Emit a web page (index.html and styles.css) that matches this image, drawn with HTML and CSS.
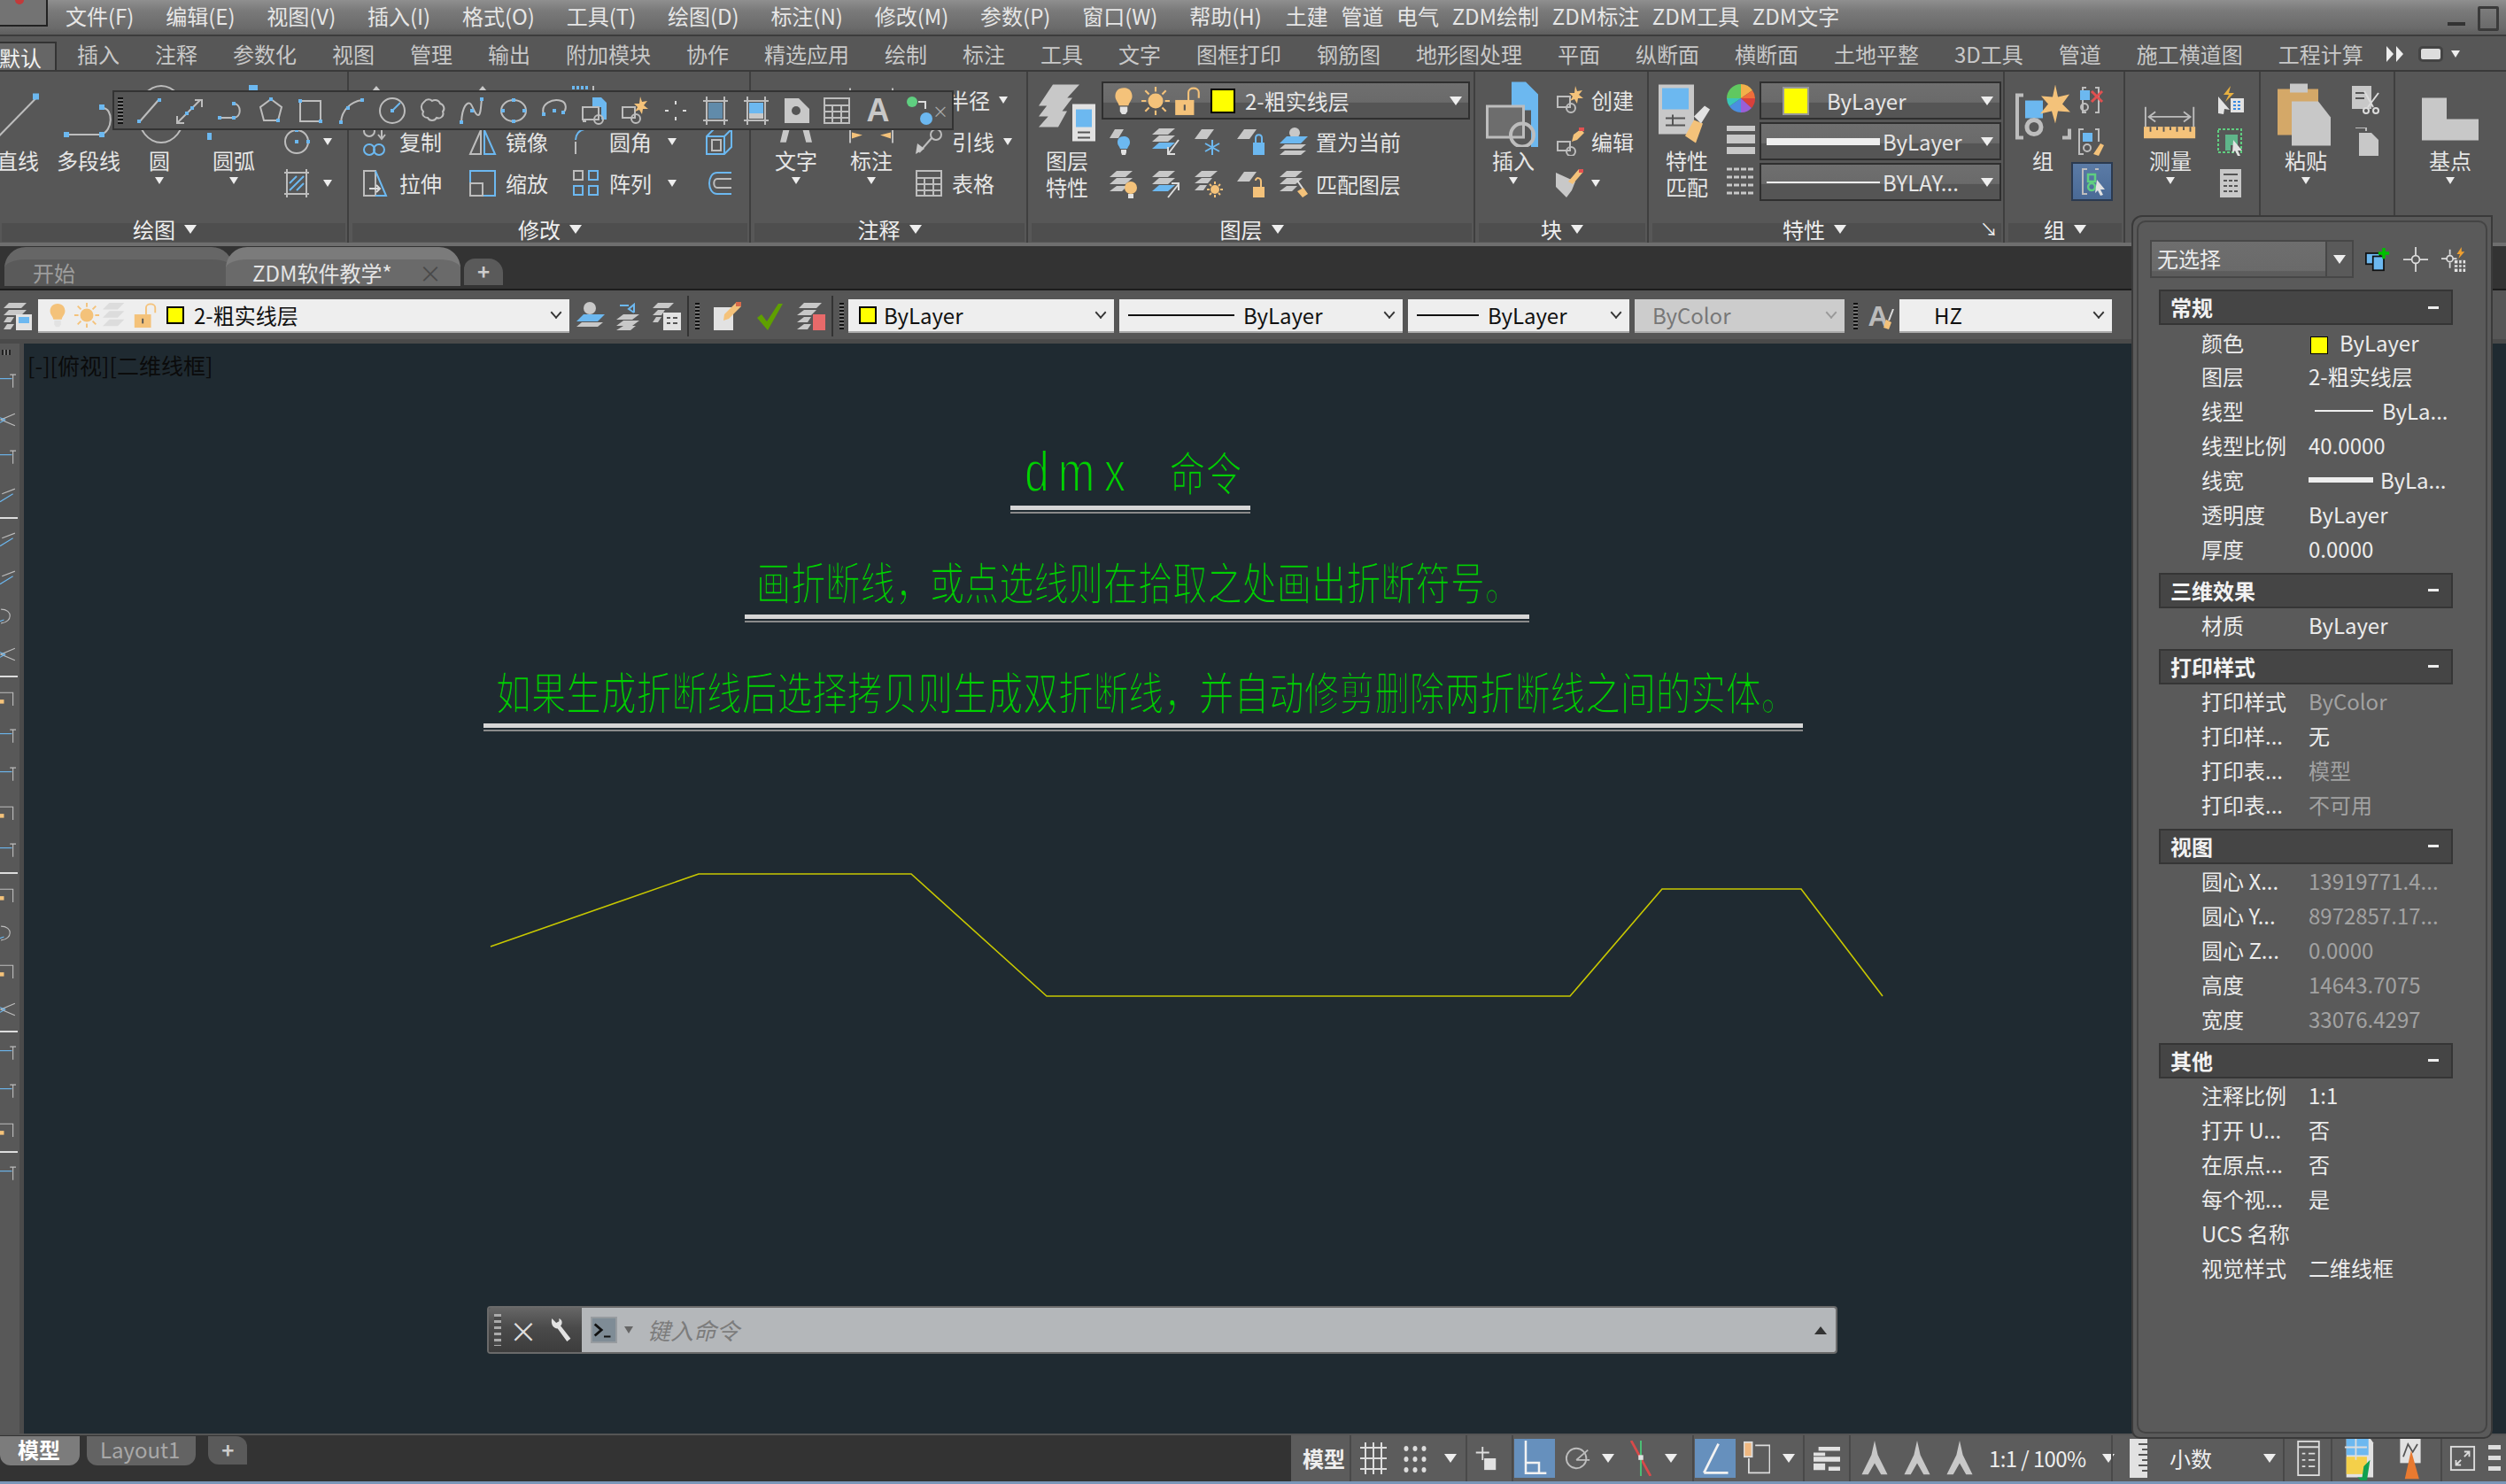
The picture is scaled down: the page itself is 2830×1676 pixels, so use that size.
FILE: index.html
```html
<!DOCTYPE html>
<html lang="zh-CN">
<head>
    <meta charset="UTF-8">
    <title>ZDM软件教学</title>
    <link rel="stylesheet" href="styles.css">
</head>
<body>
<svg class="sprite" xmlns="http://www.w3.org/2000/svg">
    <symbol id="bulb" viewBox="0 0 32 32"><path class="fo" d="M16 2c6 0 9 4 9 9 0 4-3 6-4 10H11c-1-4-4-6-4-10 0-5 3-9 9-9z"/><path class="fw" d="M12 22h8v5l-2 3h-4l-2-3z"/></symbol>
    <symbol id="bulb-b" viewBox="0 0 32 32"><path class="fb" d="M16 10c5 0 7 3 7 7 0 3-2 4-3 7h-8c-1-3-3-4-3-7 0-4 2-7 7-7z"/><path class="fw" d="M13 25h6v3l-1 3h-4l-1-3z"/><path class="fg" d="M6 2h10l-6 10H0z"/></symbol>
    <symbol id="sun" viewBox="0 0 32 32"><circle class="fo" cx="16" cy="16" r="8"/><path class="so" d="M16 1v5M16 26v5M1 16h5M26 16h5M5 5l4 4M23 23l4 4M5 27l4-4M23 9l4-4"/></symbol>
    <symbol id="lock-open" viewBox="0 0 32 32"><rect class="fo" x="3" y="15" width="20" height="16"/><path class="so" d="M17 15V7c0-6 11-6 11 0v6"/><path class="sd" d="M13 20v6"/></symbol>
    <symbol id="lock-b" viewBox="0 0 32 32"><rect class="fb" x="18" y="17" width="13" height="14"/><path class="sb" d="M21 17v-5c0-5 7-5 7 0v5"/><path class="fg" d="M8 2h14l-8 11H0z"/></symbol>
    <symbol id="lock-o" viewBox="0 0 32 32"><rect class="fo" x="18" y="19" width="13" height="12"/><path class="so" d="M27 19v-6c0-5-6-5-6-1"/><path class="fg" d="M8 2h14l-8 11H0z"/></symbol>
    <symbol id="snow" viewBox="0 0 32 32"><path class="fg" d="M8 2h14l-8 11H0z"/><path class="sb" d="M20 14v17M12 18l16 9M12 27l16-9"/></symbol>
    <symbol id="sheets" viewBox="0 0 32 32"><path class="fg" d="M8 1h18l-8 8H0zM8 11h18l-8 8H0zM8 21h18l-8 8H0z"/></symbol>
    <symbol id="sheets-blue" viewBox="0 0 32 32"><path class="fg" d="M8 1h18l-8 7H0zM8 9h18l-8 7H0z"/><path class="fb" d="M8 17h18l-8 7H0z"/><path class="sw" d="M30 14L18 30M18 22v8h8"/></symbol>
    <symbol id="sheets-up" viewBox="0 0 32 32"><path class="fg" d="M8 1h18l-8 7H0zM8 9h18l-8 7H0z"/><path class="fb" d="M8 17h18l-8 7H0z"/><path class="sw" d="M18 31L30 16M22 15h8v8"/></symbol>
    <symbol id="sheets-current" viewBox="0 0 32 32"><circle class="fg" cx="17" cy="6" r="6"/><path class="fb" d="M8 10h24l-8 8H0z"/><path class="fg" d="M6 19h24l-6 5H0zM6 26h24l-6 5H0z"/></symbol>
    <symbol id="sheets-bulb" viewBox="0 0 32 32"><path class="fg" d="M8 1h18l-8 7H0zM8 9h18l-8 7H0zM8 18h12l-6 6H0z"/><circle class="fo" cx="24" cy="20" r="7"/><rect class="fw" x="21" y="27" width="6" height="5"/></symbol>
    <symbol id="sheets-sun" viewBox="0 0 32 32"><path class="fg" d="M8 1h18l-8 7H0zM8 9h12l-5 6H0zM6 17h8l-4 6H0z"/><circle class="fo" cx="23" cy="22" r="5"/><path class="so" d="M23 13v3M23 28v3M14 22h3M29 22h3M17 16l2 2M29 28l-2-2M17 28l2-2M29 16l-2 2"/></symbol>
    <symbol id="sheets-brush" viewBox="0 0 32 32"><path class="fg" d="M8 1h18l-8 7H0zM8 9h18l-8 7H0zM8 18h12l-6 6H0z"/><path class="sw" d="M20 12l7 10"/><path class="fo" d="M20 24l7-4 5 7-6 4z"/></symbol>
    <symbol id="layer-state" viewBox="0 0 64 64"><path class="fg" d="M16 0h30L24 24H0zM16 15h22L22 36H0zM16 30h16L22 48H0z"/><rect class="fw" x="38" y="22" width="26" height="42"/><rect class="fb" x="42" y="28" width="18" height="20"/><path class="sd" d="M44 54h14M58 60H44"/></symbol>
    <symbol id="line" viewBox="0 0 48 50"><path class="sg" d="M2 48L44 5"/><rect class="fb" x="40" y="0" width="7" height="7"/></symbol>
    <symbol id="polyline" viewBox="0 0 56 40"><path class="sg" d="M2 34h40"/><path class="sg" d="M44 4c12 0 12 26-2 30"/><rect class="fb" x="0" y="31" width="6" height="6"/><rect class="fb" x="40" y="31" width="6" height="6"/><rect class="fb" x="40" y="0" width="6" height="6"/></symbol>
    <symbol id="circle-c" viewBox="0 0 32 32"><circle class="sg" cx="16" cy="16" r="13"/><rect class="fb" x="14" y="14" width="4" height="4"/><rect class="fb" x="14" y="1" width="4" height="4"/><rect class="fb" x="27" y="14" width="4" height="4"/></symbol>
    <symbol id="hatch" viewBox="0 0 32 32"><path class="sg" d="M2 4h28M2 28h28M5 0v32M27 0v32"/><path class="sb" d="M8 24L24 8M8 16l8-8M16 24l8-8"/></symbol>
    <symbol id="seg" viewBox="0 0 32 32"><path class="sg" d="M5 28L26 4"/><rect class="fb" x="2" y="26" width="4" height="4"/><rect class="fb" x="25" y="2" width="4" height="4"/></symbol>
    <symbol id="xline" viewBox="0 0 32 32"><path class="sg" d="M2 30L28 4M22 4h8v8M2 22v8h8"/><rect class="fb" x="11" y="17" width="4" height="4"/><rect class="fb" x="17" y="11" width="4" height="4"/></symbol>
    <symbol id="pline-s" viewBox="0 0 32 32"><path class="sg" d="M3 24h16M20 8c9 0 9 16 0 16"/><rect class="fb" x="2" y="22" width="4" height="4"/><rect class="fb" x="18" y="22" width="4" height="4"/><rect class="fb" x="18" y="6" width="4" height="4"/></symbol>
    <symbol id="poly" viewBox="0 0 32 32"><path class="sg" d="M16 3l12 9-4 15H8L4 12z"/><rect class="fb" x="14" y="1" width="4" height="4"/><rect class="fb" x="22" y="25" width="4" height="4"/></symbol>
    <symbol id="rect" viewBox="0 0 32 32"><path class="sg" d="M4 5h23v23H4z"/><rect class="fb" x="2" y="3" width="4" height="4"/><rect class="fb" x="25" y="26" width="4" height="4"/></symbol>
    <symbol id="arc" viewBox="0 0 32 32"><path class="sg" d="M4 29C5 16 14 6 28 4"/><rect class="fb" x="2" y="27" width="4" height="4"/><rect class="fb" x="10" y="11" width="4" height="4"/><rect class="fb" x="26" y="2" width="4" height="4"/></symbol>
    <symbol id="circle-p" viewBox="0 0 32 32"><circle class="sg" cx="16" cy="16" r="14"/><rect class="fb" x="14" y="14" width="4" height="4"/><path class="sb" d="M17 15l8-8"/></symbol>
    <symbol id="cloud" viewBox="0 0 32 32"><path class="sg" d="M6 6c3-4 7-3 9-1 3-2 8-1 9 3 4 1 6 6 3 9 2 5-3 9-7 7-2 4-8 4-10 0-4 0-7-3-5-7C2 14 2 9 6 6z"/></symbol>
    <symbol id="spline" viewBox="0 0 32 32"><path class="sg" d="M3 29C4 10 10 6 13 8c3 2 5 13 9 13 3 0 3-10 4-18"/><rect class="fb" x="1" y="27" width="4" height="4"/><rect class="fb" x="13" y="14" width="4" height="4"/><rect class="fb" x="24" y="1" width="4" height="4"/></symbol>
    <symbol id="ellipse" viewBox="0 0 32 32"><ellipse class="sg" cx="16" cy="16" rx="14" ry="12"/><rect class="fb" x="14" y="2" width="4" height="4"/><rect class="fb" x="2" y="14" width="4" height="4"/><rect class="fb" x="26" y="14" width="4" height="4"/><rect class="fb" x="14" y="26" width="4" height="4"/></symbol>
    <symbol id="ell-arc" viewBox="0 0 32 32"><path class="sg" d="M4 20C0 8 14 2 24 5c6 2 6 10 2 13"/><rect class="fb" x="14" y="14" width="4" height="4"/><rect class="fb" x="24" y="16" width="4" height="4"/><rect class="fb" x="2" y="18" width="4" height="4"/></symbol>
    <symbol id="block" viewBox="0 0 32 32"><path class="fb" d="M14 1h10l6 6v19h-6V12H14z"/><path class="sg" d="M3 12h18v14H3zM3 28h4"/><circle class="sg" cx="21" cy="26" r="5"/></symbol>
    <symbol id="block-star" viewBox="0 0 32 32"><path class="sg" d="M2 12h14v12H2z"/><circle class="sg" cx="17" cy="25" r="5"/><path class="fo" d="M22 0l2 6 6-1-4 5 5 4-6 0-1 6-3-5-5 2 3-5-4-4 6 0z"/></symbol>
    <symbol id="points" viewBox="0 0 32 32"><path class="sw" d="M16 5v4M16 23v4M4 16h4M24 16h4"/></symbol>
    <symbol id="hatch-b" viewBox="0 0 32 32"><path class="sg" d="M2 5h28M2 27h28M6 0v32M26 0v32"/><rect class="fb" x="8" y="7" width="16" height="18" opacity=".55"/></symbol>
    <symbol id="grad" viewBox="0 0 32 32"><path class="sg" d="M2 5h28M2 27h28M6 0v32M26 0v32"/><rect class="fb" x="8" y="7" width="16" height="12"/><rect class="fg" x="8" y="19" width="16" height="6"/></symbol>
    <symbol id="region" viewBox="0 0 32 32"><path class="fg" d="M2 2h16l12 12v16H2z"/><circle class="fd" cx="15" cy="16" r="5"/></symbol>
    <symbol id="table" viewBox="0 0 32 32"><path class="sg" d="M2 2h28v28H2zM2 10h28M2 17h28M2 24h28M11 10v20M21 10v20"/></symbol>
    <symbol id="addsel" viewBox="0 0 32 32"><circle cx="8" cy="6" r="6" fill="#5fcf80"/><path class="sw" d="M15 6h8v8"/><circle class="fb" cx="24" cy="25" r="7"/></symbol>
    <symbol id="copy" viewBox="0 0 32 32"><circle class="sg" cx="8" cy="4" r="6"/><path class="sg" d="M22 0v12M18 8l4 5 4-5"/><circle class="sb" cx="8" cy="25" r="6"/><circle class="sb" cx="19" cy="25" r="6"/></symbol>
    <symbol id="mirror" viewBox="0 0 32 32"><path class="sg" d="M2 30L14 3v27z"/><path class="sb" d="M18 3l12 27H18z"/></symbol>
    <symbol id="fillet" viewBox="0 0 32 32"><path class="sb" d="M4 14C4 8 8 3 14 2"/><path class="sg" d="M4 16v14"/></symbol>
    <symbol id="cube" viewBox="0 0 32 32"><path class="sb" d="M2 10l8-8h20v20l-8 8H2zM2 10h20v20M22 10l8-8"/><path class="sg" d="M8 14h10v12H8z"/></symbol>
    <symbol id="stretch" viewBox="0 0 32 32"><path class="sg" d="M2 2h13v28H2z"/><path class="sb" d="M15 2l12 28H15"/><path class="sw" d="M8 22h12M16 18l4 4-4 4"/></symbol>
    <symbol id="scale" viewBox="0 0 32 32"><path class="sb" d="M2 16V2h28v28H16"/><path class="sg" d="M2 16h14v14H2z"/></symbol>
    <symbol id="array" viewBox="0 0 32 32"><path class="sg" d="M2 2h10v10H2z"/><path class="sb" d="M19 2h10v10H19zM2 19h10v10H2zM19 19h10v10H19z"/></symbol>
    <symbol id="offset" viewBox="0 0 32 32"><path class="sb" d="M30 4H14C2 4 2 28 14 28h16"/><path class="sg" d="M30 11H14c-5 0-5 10 0 10h16"/></symbol>
    <symbol id="peek-move" viewBox="0 0 32 32"><path class="fg" d="M16 0l5 6H11z"/></symbol>
    <symbol id="peek-dash" viewBox="0 0 32 32"><path d="M0 2h18" stroke="#6cb8f0" stroke-width="4" stroke-dasharray="3 2"/><path class="sg" d="M24 0v8"/></symbol>
    <symbol id="text-a" viewBox="0 0 32 50"><path class="fg" d="M12 0h8l12 50h-6L16 12 6 50H0z"/></symbol>
    <symbol id="dim" viewBox="0 0 50 62"><path class="sg" d="M1 0v62M49 0v62"/><path class="fo" d="M3 50l12 3-12 4zM47 50l-12 3 12 4z"/></symbol>
    <symbol id="leader" viewBox="0 0 32 32"><circle class="sg" cx="24" cy="8" r="6"/><path class="sg" d="M19 12L5 28"/><path class="fg" d="M1 30l2-12 8 6z"/></symbol>
    <symbol id="big-block" viewBox="0 0 64 70"><path class="fb" d="M30 0h16l14 14v60H52V32H30z"/><path class="sg3" d="M3 28h40v34H3z"/><path class="fg2" d="M4 29h38v32H4z"/><circle class="sg3" cx="42" cy="60" r="13"/></symbol>
    <symbol id="pencil-block" viewBox="0 0 32 32"><path class="sg" d="M2 16h14v10H2z"/><circle class="sg" cx="17" cy="27" r="5"/><path class="fo" d="M20 8l8-6 4 4-8 8-6 2z"/><rect x="26" y="0" width="6" height="4" fill="#e25050"/></symbol>
    <symbol id="shield" viewBox="0 0 32 32"><path class="fg" d="M0 4l22 10-4 10-6 8L0 20z"/><path class="fo" d="M14 14L26 0l5 3-12 14z"/><rect x="26" y="0" width="5" height="4" fill="#e25050"/></symbol>
    <symbol id="matchprop" viewBox="0 0 64 64"><rect class="fg" x="0" y="0" width="40" height="56"/><rect class="fb" x="4" y="4" width="30" height="24"/><path class="sd" d="M8 38h22M16 34v12M8 46h22"/><path class="fo" d="M30 58l10-18 10 4-8 22z"/><path class="fw" d="M40 36l12-12 6 4-10 16z"/></symbol>
    <symbol id="wheel" viewBox="0 0 32 32"><path fill="#f2b04a" d="M16 16V0a16 16 0 0 1 13 7z"/><path fill="#f06e3a" d="M16 16l13-9a16 16 0 0 1 3 9z"/><path fill="#d8403c" d="M16 16h16a16 16 0 0 1-4 11z"/><path fill="#9a5fd8" d="M16 16l12 11a16 16 0 0 1-12 5z"/><path fill="#4a8fe0" d="M16 16v16A16 16 0 0 1 3 25z"/><path fill="#3ac6b8" d="M16 16L3 25A16 16 0 0 1 0 16z"/><path fill="#60c860" d="M16 16H0A16 16 0 0 1 16 0z"/></symbol>
    <symbol id="lw" viewBox="0 0 32 32"><path class="fg" d="M0 0h32v6H0zM0 10h32v10H0zM0 24h32v8H0z"/></symbol>
    <symbol id="lt" viewBox="0 0 32 32"><path class="dash" d="M0 2h32M0 11h32M0 20h32M0 29h32"/></symbol>
    <symbol id="group" viewBox="0 0 64 64"><path class="sg3" d="M10 12H3v48h7M54 60h8V50"/><rect class="fb" x="12" y="18" width="20" height="20"/><circle class="sg5" cx="22" cy="48" r="8"/><path class="fo" d="M46 0l3 14 13-3-8 11 9 9-14-1-3 14-4-14-13 3 9-11-8-9 13 1z"/></symbol>
    <symbol id="ungroup" viewBox="0 0 32 32"><path class="sg" d="M12 2H8v28h4M22 30h4V2h-4"/><rect class="fb" x="5" y="5" width="11" height="11"/><circle class="sg" cx="10" cy="24" r="4"/><path d="M18 6l12 12M30 6L18 18" stroke="#e05050" stroke-width="3"/></symbol>
    <symbol id="groupedit" viewBox="0 0 32 32"><path class="sg" d="M9 2H4v28h5M22 2h4v14"/><rect class="fb" x="8" y="6" width="11" height="10"/><circle class="sg" cx="13" cy="23" r="4"/><path class="fo" d="M20 30l8-12 4 2-6 12z"/></symbol>
    <symbol id="groupsel" viewBox="0 0 32 32"><path class="sg" d="M9 2H4v28h5M18 2h4"/><path d="M10 8h8v8h-8z M14 18a4 4 0 1 0 .1 0z" fill="none" stroke="#5fcf80" stroke-width="2.5"/><path class="fw" d="M20 14l9 11-5 0 3 6-3 1-3-6-3 3z"/></symbol>
    <symbol id="measure" viewBox="0 0 64 40"><path class="sg" d="M2 2v24M60 2v24M6 14h50M14 8l-8 6 8 6M48 8l8 6-8 6"/><rect class="fo" x="0" y="26" width="62" height="14"/><path class="sd" d="M8 26v6M16 26v4M24 26v6M32 26v4M40 26v6M48 26v4M56 26v6"/></symbol>
    <symbol id="qselect" viewBox="0 0 32 32"><path d="M16 0l-8 10h6l-4 8 10-10h-6z" fill="#e8b040"/><path class="fw" d="M2 12l13 15-6-1-1 6-6-1z"/><rect class="fw" x="16" y="14" width="15" height="16"/><path d="M19 18h9M19 22h9M19 26h9" stroke="#3a8ae0" stroke-width="2" stroke-dasharray="3 2"/></symbol>
    <symbol id="selectall" viewBox="0 0 32 32"><rect x="2" y="2" width="26" height="26" fill="none" stroke="#5fcf80" stroke-width="2" stroke-dasharray="3 2"/><path fill="#5fb58a" d="M10 8h14v12H16v6h-6z"/><path class="fw" d="M19 14l10 12-5 0 3 6-3 0-3-6-3 3z"/></symbol>
    <symbol id="calc" viewBox="0 0 32 32"><rect class="fg" x="4" y="0" width="24" height="32"/><path class="sd" d="M8 6h16M8 13h4M14 13h4M20 13h4M8 19h4M14 19h4M20 19h4M8 25h4M14 25h4M20 25h4"/></symbol>
    <symbol id="paste" viewBox="0 0 64 70"><rect x="0" y="8" width="46" height="52" fill="#d4a868"/><rect class="fg" x="14" y="2" width="20" height="10"/><path class="fg" d="M16 22h30l14 18v32H16z"/></symbol>
    <symbol id="cut" viewBox="0 0 32 32"><rect class="fg" x="0" y="0" width="22" height="26"/><path class="sd" d="M4 8h12M4 14h10"/><path class="sw" d="M14 6l10 18M30 8L18 24"/><circle class="sw" cx="16" cy="28" r="3"/><circle class="sw" cx="27" cy="28" r="3"/></symbol>
    <symbol id="paste-s" viewBox="0 0 32 32"><path class="sg" d="M4 0h12v4"/><path class="fg" d="M8 6h14l8 8v18H8z"/></symbol>
    <symbol id="basept" viewBox="0 0 64 48"><path class="fg" d="M0 0h28v24h36v24H0z"/></symbol>
    <symbol id="layer-map" viewBox="0 0 32 32"><path class="fg" d="M6 1h20l-6 6H0zM6 9h20l-6 6H0zM4 17h8l-4 6H0zM4 25h8l-4 6H0z"/><rect class="fw" x="14" y="14" width="18" height="18"/><rect class="fb" x="17" y="17" width="12" height="7"/></symbol>
    <symbol id="layer-prev" viewBox="0 0 32 32"><circle class="fg" cx="15" cy="7" r="7"/><path class="fb" d="M8 14h24l-8 8H0z"/><path class="fg" d="M6 23h24l-6 5H0z"/></symbol>
    <symbol id="layer-back" viewBox="0 0 32 32"><path class="sb" d="M22 12V3l-6 5 6 4M6 4h10"/><path class="fg" d="M10 14h18l-8 6H2zM10 21h18l-8 6H2zM10 27h14l-6 5H2z"/></symbol>
    <symbol id="layer-grid" viewBox="0 0 32 32"><path class="fg" d="M6 1h18l-6 6H0zM6 9h8l-4 6H0zM4 17h6l-4 6H0z"/><rect class="fw" x="12" y="12" width="20" height="20"/><path class="sd" d="M16 18h4M23 18h5M16 24h4M23 24h5"/></symbol>
    <symbol id="notes" viewBox="0 0 32 32"><path class="fw" d="M0 6h22v26H0z"/><path class="fo" d="M12 14L26 0l5 5-14 14-6 2z"/><rect x="25" y="0" width="6" height="5" fill="#d86a4a"/></symbol>
    <symbol id="check" viewBox="0 0 32 32"><path d="M2 18l5-4 6 8L26 2h5L14 32z" fill="#5fa000"/></symbol>
    <symbol id="layer-red" viewBox="0 0 32 32"><path class="fg" d="M8 1h20l-6 6H2zM8 9h14l-6 6H0zM8 17h8l-4 6H0zM8 25h8l-4 6H0z"/><rect x="18" y="14" width="14" height="18" fill="#e86a6a"/></symbol>
    <symbol id="brush" viewBox="0 0 12 24"><path class="sw" d="M11 0L6 13"/><path class="fo" d="M3 12l6 3-3 8-6-2z"/></symbol>
    <symbol id="pal-add" viewBox="0 0 32 32"><rect x="1" y="8" width="18" height="14" fill="#6cb8f0" stroke="#111" stroke-width="2"/><rect x="10" y="12" width="14" height="18" fill="#6cb8f0" stroke="#111" stroke-width="2"/><path d="M24 1v14M17 8h14" stroke="#00c000" stroke-width="4"/></symbol>
    <symbol id="pal-pick" viewBox="0 0 32 32"><circle class="sw" cx="16" cy="16" r="5"/><path class="sw" d="M16 0v11M16 21v11M0 16h11M21 16h11"/></symbol>
    <symbol id="pal-quick" viewBox="0 0 32 32"><circle class="sw" cx="11" cy="15" r="4"/><path class="sw" d="M11 3v7M11 20v7M0 15h7M15 15h5"/><rect class="fw" x="17" y="17" width="14" height="15"/><path class="sd" d="M17 22h14M17 27h14M22 17v15M27 17v15"/><path d="M26 0l-6 9h4l-2 6 8-9h-4z" fill="#f0a030"/></symbol>
    <symbol id="mark-t" viewBox="0 0 32 32"><path class="sb" d="M0 10h24"/><path class="sg" d="M26 2v26M20 2h12"/></symbol>
    <symbol id="mark-v" viewBox="0 0 32 32"><path class="sg" d="M30 4L2 16l28 12"/><path class="sb" d="M0 12l10 4-10 6"/></symbol>
    <symbol id="mark-d" viewBox="0 0 32 32"><path class="sb" d="M0 28l26-16"/><path class="sg" d="M4 12L30 2"/></symbol>
    <symbol id="mark-c" viewBox="0 0 32 32"><path class="sg" d="M2 2c24 0 24 26 0 28"/><path class="sb" d="M0 26l8-3"/></symbol>
    <symbol id="mark-o" viewBox="0 0 32 32"><path class="sg" d="M0 4h26v26M30 4"/><rect class="fo" x="0" y="18" width="8" height="8"/></symbol>
    <symbol id="ortho" viewBox="0 0 32 32"><path class="sw" d="M12 2v16M4 9h16"/><rect class="fw" x="14" y="16" width="14" height="14"/></symbol>
    <symbol id="lshape" viewBox="0 0 32 48"><path class="swb" d="M4 0v44h28M4 30h18v14"/></symbol>
    <symbol id="polar" viewBox="0 0 32 32"><circle class="sg" cx="14" cy="16" r="12"/><path class="sg" d="M14 18l14-12M14 18h16"/></symbol>
    <symbol id="osnap" viewBox="0 0 32 44"><path d="M4 0l24 44" stroke="#d84a4a" stroke-width="3"/><path d="M16 0v44" stroke="#4ac878" stroke-width="2"/><rect class="fw" x="13" y="18" width="6" height="6"/></symbol>
    <symbol id="angle" viewBox="0 0 32 44"><path class="swb" d="M2 40h30M2 40L20 4"/></symbol>
    <symbol id="iso" viewBox="0 0 32 44"><rect x="0" y="2" width="10" height="18" fill="#f0b880" stroke="#ddd" stroke-width="2"/><path class="sw" d="M6 22v18h26V6H14"/></symbol>
    <symbol id="bars" viewBox="0 0 32 32"><path class="fw" d="M6 2h26v5H6zM0 14h32v6H0zM0 22h14v8H0zM0 9h14v4H0zM18 26h14v5H18z"/></symbol>
    <symbol id="annot" viewBox="0 0 32 44"><path class="fg" d="M16 0l4 18 12 24h-8l-8-14-8 14H0l12-24z"/></symbol>
    <symbol id="ruler" viewBox="0 0 20 44"><path class="fw" d="M0 0h20v44H0z"/><path class="sd" d="M10 6h10M14 12h6M10 18h10M14 24h6M10 30h10M14 36h6"/></symbol>
    <symbol id="listbox" viewBox="0 0 28 44"><rect class="sw" x="1" y="1" width="26" height="42"/><path class="sw" d="M1 8h26M6 16h4M14 16h8M6 24h4M14 24h8M6 32h4M14 32h8"/></symbol>
    <symbol id="iso-obj" viewBox="0 0 40 56"><path class="fw" d="M4 0h28l6 8v44H4z"/><rect x="4" y="0" width="28" height="24" fill="#6cb8f0"/><rect x="4" y="26" width="26" height="22" fill="#f4d04a"/><path class="sw" d="M16 0v30M2 14h28"/><path d="M18 52l6 0 2-14 8-8-4 26-6 2z" fill="#10a050"/></symbol>
    <symbol id="cone" viewBox="0 0 30 56"><rect class="fw" x="2" y="0" width="26" height="34"/><path class="sd" d="M6 26l6-16 6 10 6-10"/><path d="M16 18l10 36H8z" fill="#e87a30"/></symbol>
    <symbol id="fullscr" viewBox="0 0 32 32"><rect class="sw" x="2" y="2" width="28" height="28"/><path class="sw" d="M8 24l6-6M8 18v6h6M24 8l-6 6M24 14V8h-6"/></symbol>
    <symbol id="wrench" viewBox="0 0 32 32"><path class="fw" d="M4 0l6 6 4-2 0-4c5 2 5 8 2 10l14 18-5 4L12 14C6 14 2 8 4 0z"/></symbol>
    <symbol id="cmd" viewBox="0 0 32 32"><rect x="1" y="1" width="30" height="30" fill="#7f8c96" stroke="#989ca0" stroke-width="2"/><path d="M5 9l8 7-8 7" fill="none" stroke="#111" stroke-width="3"/><path d="M16 24h8" stroke="#111" stroke-width="2"/></symbol>
</svg>

<header class="menubar">
    <div class="app-btn"><span class="app-dot"></span></div>
    <nav class="menu-main">
        <span>文件(F)</span><span>编辑(E)</span><span>视图(V)</span><span>插入(I)</span><span>格式(O)</span><span>工具(T)</span><span>绘图(D)</span><span>标注(N)</span><span>修改(M)</span><span>参数(P)</span><span>窗口(W)</span><span>帮助(H)</span>
    </nav>
    <nav class="menu-extra">
        <span>土建</span><span>管道</span><span>电气</span><span>ZDM绘制</span><span>ZDM标注</span><span>ZDM工具</span><span>ZDM文字</span>
    </nav>
    <div class="win-btns"><span class="win-min"></span><span class="win-restore"></span></div>
</header>

<div class="ribbon-tabs">
    <span class="rtab active">默认</span><span class="rtab">插入</span><span class="rtab">注释</span><span class="rtab">参数化</span><span class="rtab">视图</span><span class="rtab">管理</span><span class="rtab">输出</span><span class="rtab">附加模块</span><span class="rtab">协作</span><span class="rtab">精选应用</span><span class="rtab">绘制</span><span class="rtab">标注</span><span class="rtab">工具</span><span class="rtab">文字</span><span class="rtab">图框打印</span><span class="rtab">钢筋图</span><span class="rtab">地形图处理</span><span class="rtab">平面</span><span class="rtab">纵断面</span><span class="rtab">横断面</span><span class="rtab">土地平整</span><span class="rtab">3D工具</span><span class="rtab">管道</span><span class="rtab">施工横道图</span><span class="rtab">工程计算</span>
    <span class="rtab-more">
        <i class="tri-r"></i><i class="tri-r"></i><b class="cam"></b><i class="caret sm"></i>
    </span>
</div>

<section class="ribbon">
    <div class="panel p-draw">
        <div class="panel-body">
            <div class="big w45"><svg class="i-line"><use href="#line"/></svg><span class="lbl clip-l">直线</span></div>
            <div class="big w110"><svg class="i-pline"><use href="#polyline"/></svg><span class="lbl">多段线</span></div>
            <div class="big w50"><span class="big-circle"></span><span class="lbl">圆</span><i class="caret sm"></i></div>
            <div class="big w118"><span class="arc-peek"></span><span class="lbl">圆弧</span><i class="caret sm"></i></div>
            <div class="small-col col-draw">
                <div class="tool"></div>
                <div class="tool"><svg class="ic"><use href="#circle-c"/></svg><i class="caret sm"></i></div>
                <div class="tool"><svg class="ic"><use href="#hatch"/></svg><i class="caret sm"></i></div>
            </div>
        </div>
        <div class="panel-title">绘图<i class="caret"></i></div>
    </div>

    <div class="panel p-modify">
        <div class="panel-body mod-grid">
            <div class="tool"><svg class="ic"><use href="#peek-move"/></svg></div>
            <div class="tool"><svg class="ic"><use href="#peek-move"/></svg></div>
            <div class="tool"><svg class="ic"><use href="#peek-dash"/></svg></div>
            <div class="tool"></div>
            <div class="tool"><svg class="ic"><use href="#copy"/></svg><span>复制</span></div>
            <div class="tool"><svg class="ic"><use href="#mirror"/></svg><span>镜像</span></div>
            <div class="tool"><svg class="ic"><use href="#fillet"/></svg><span>圆角</span><i class="caret sm"></i></div>
            <div class="tool"><svg class="ic"><use href="#cube"/></svg></div>
            <div class="tool"><svg class="ic"><use href="#stretch"/></svg><span>拉伸</span></div>
            <div class="tool"><svg class="ic"><use href="#scale"/></svg><span>缩放</span></div>
            <div class="tool"><svg class="ic"><use href="#array"/></svg><span>阵列</span><i class="caret sm"></i></div>
            <div class="tool"><svg class="ic"><use href="#offset"/></svg></div>
        </div>
        <div class="panel-title">修改<i class="caret"></i></div>
    </div>

    <div class="panel p-note">
        <div class="panel-body">
            <div class="big w76 note-text"><svg class="i-a"><use href="#text-a"/></svg><span class="lbl">文字</span><i class="caret sm"></i></div>
            <div class="big w76 note-dim"><svg class="i-dim"><use href="#dim"/></svg><span class="lbl">标注</span><i class="caret sm"></i></div>
            <div class="small-col col-note">
                <div class="tool"><span class="lbl-far">半径</span><i class="caret sm"></i></div>
                <div class="tool"><svg class="ic"><use href="#leader"/></svg><span>引线</span><i class="caret sm"></i></div>
                <div class="tool"><svg class="ic"><use href="#table"/></svg><span>表格</span></div>
            </div>
        </div>
        <div class="panel-title">注释<i class="caret"></i></div>
    </div>

    <div class="panel p-layer">
        <div class="panel-body">
            <div class="big w72"><svg class="i-big"><use href="#layer-state"/></svg><span class="lbl">图层<br>特性</span></div>
            <div class="layer-side">
                <div class="rib-combo layer-combo">
                    <svg class="ic-s"><use href="#bulb"/></svg><svg class="ic-s"><use href="#sun"/></svg><svg class="ic-s"><use href="#lock-open"/></svg>
                    <span class="swatch"></span><span class="combo-text">2-粗实线层</span><i class="caret end"></i>
                </div>
                <div class="layer-row">
                    <svg class="ic"><use href="#bulb-b"/></svg><svg class="ic"><use href="#sheets-blue"/></svg><svg class="ic"><use href="#snow"/></svg><svg class="ic"><use href="#lock-b"/></svg><svg class="ic"><use href="#sheets-current"/></svg><span>置为当前</span>
                </div>
                <div class="layer-row">
                    <svg class="ic"><use href="#sheets-bulb"/></svg><svg class="ic"><use href="#sheets-up"/></svg><svg class="ic"><use href="#sheets-sun"/></svg><svg class="ic"><use href="#lock-o"/></svg><svg class="ic"><use href="#sheets-brush"/></svg><span>匹配图层</span>
                </div>
            </div>
        </div>
        <div class="panel-title">图层<i class="caret"></i></div>
    </div>

    <div class="panel p-block">
        <div class="panel-body">
            <div class="big w82"><svg class="i-big"><use href="#big-block"/></svg><span class="lbl">插入</span><i class="caret sm"></i></div>
            <div class="small-col">
                <div class="tool"><svg class="ic"><use href="#block-star"/></svg><span>创建</span></div>
                <div class="tool"><svg class="ic"><use href="#pencil-block"/></svg><span>编辑</span></div>
                <div class="tool"><svg class="ic"><use href="#shield"/></svg><i class="caret sm"></i></div>
            </div>
        </div>
        <div class="panel-title">块<i class="caret"></i></div>
    </div>

    <div class="panel p-prop">
        <div class="panel-body">
            <div class="big w80"><svg class="i-big"><use href="#matchprop"/></svg><span class="lbl">特性<br>匹配</span></div>
            <div class="prop-icons">
                <svg class="ic"><use href="#wheel"/></svg>
                <svg class="ic"><use href="#lw"/></svg>
                <svg class="ic"><use href="#lt"/></svg>
            </div>
            <div class="prop-combos">
                <div class="rib-combo"><span class="swatch-lg"></span><span class="combo-text t-bylayer">ByLayer</span><i class="caret end"></i></div>
                <div class="rib-combo"><span class="rule-thick"></span><span class="combo-text">ByLayer</span><i class="caret end"></i></div>
                <div class="rib-combo"><span class="rule-thin"></span><span class="combo-text">BYLAY...</span><i class="caret end"></i></div>
            </div>
        </div>
        <div class="panel-title">特性<i class="caret"></i><span class="launcher">↘</span></div>
    </div>

    <div class="panel p-group">
        <div class="panel-body">
            <div class="big w74"><svg class="i-big"><use href="#group"/></svg><span class="lbl">组</span></div>
            <div class="small-col">
                <div class="tool"><svg class="ic"><use href="#ungroup"/></svg></div>
                <div class="tool"><svg class="ic"><use href="#groupedit"/></svg></div>
                <div class="tool tool-on"><svg class="ic"><use href="#groupsel"/></svg></div>
            </div>
        </div>
        <div class="panel-title">组<i class="caret"></i></div>
    </div>

    <div class="panel p-measure">
        <div class="panel-body">
            <div class="big w104"><svg class="i-ruler"><use href="#measure"/></svg><span class="lbl">测量</span><i class="caret sm"></i></div>
            <div class="small-col">
                <div class="tool"><svg class="ic"><use href="#qselect"/></svg></div>
                <div class="tool"><svg class="ic"><use href="#selectall"/></svg></div>
                <div class="tool"><svg class="ic"><use href="#calc"/></svg></div>
            </div>
        </div>
    </div>

    <div class="panel p-paste">
        <div class="panel-body">
            <div class="big w104"><svg class="i-big"><use href="#paste"/></svg><span class="lbl">粘贴</span><i class="caret sm"></i></div>
            <div class="small-col">
                <div class="tool"><svg class="ic"><use href="#cut"/></svg></div>
                <div class="tool"><svg class="ic"><use href="#paste-s"/></svg></div>
            </div>
        </div>
    </div>

    <div class="panel p-base">
        <div class="panel-body">
            <div class="big w120"><svg class="i-base"><use href="#basept"/></svg><span class="lbl">基点</span><i class="caret sm"></i></div>
        </div>
    </div>
</section>

<div class="float-bar">
    <span class="grip"></span>
    <svg class="fl"><use href="#seg"/></svg><svg class="fl"><use href="#xline"/></svg><svg class="fl"><use href="#pline-s"/></svg><svg class="fl"><use href="#poly"/></svg><svg class="fl"><use href="#rect"/></svg><svg class="fl"><use href="#arc"/></svg><svg class="fl"><use href="#circle-p"/></svg><svg class="fl"><use href="#cloud"/></svg><svg class="fl"><use href="#spline"/></svg><svg class="fl"><use href="#ellipse"/></svg><svg class="fl"><use href="#ell-arc"/></svg><svg class="fl"><use href="#block"/></svg><svg class="fl"><use href="#block-star"/></svg><svg class="fl"><use href="#points"/></svg><svg class="fl"><use href="#hatch-b"/></svg><svg class="fl"><use href="#grad"/></svg><svg class="fl"><use href="#region"/></svg><svg class="fl"><use href="#table"/></svg><span class="fl-a">A</span><svg class="fl"><use href="#addsel"/></svg>
    <span class="fl-x">×</span>
</div>

<div class="doc-tabs">
    <div class="dtab">开始</div>
    <div class="dtab active">ZDM软件教学*<span class="dtab-x">×</span></div>
    <div class="dtab-plus">+</div>
</div>

<div class="toolbar">
    <svg class="ic tb-first"><use href="#layer-map"/></svg>
    <div class="combo c-layer">
        <svg class="ic-t"><use href="#bulb"/></svg><svg class="ic-t"><use href="#sun"/></svg><svg class="ic-t dimmed"><use href="#sheets"/></svg><svg class="ic-t"><use href="#lock-open"/></svg>
        <span class="swatch-t"></span><span>2-粗实线层</span><i class="chev"></i>
    </div>
    <div class="tb-icons">
        <svg class="ic"><use href="#layer-prev"/></svg><svg class="ic"><use href="#layer-back"/></svg><svg class="ic"><use href="#layer-grid"/></svg>
    </div>
    <span class="tb-sep"></span><span class="grip g-dark"></span>
    <div class="tb-icons g2">
        <svg class="ic"><use href="#notes"/></svg><svg class="ic"><use href="#check"/></svg><svg class="ic"><use href="#layer-red"/></svg>
    </div>
    <span class="tb-sep"></span><span class="grip g-dark"></span>
    <div class="combo c-color"><span class="swatch-t"></span><span>ByLayer</span><i class="chev"></i></div>
    <div class="combo c-ltype"><span class="rule-b"></span><span>ByLayer</span><i class="chev"></i></div>
    <div class="combo c-lweight"><span class="rule-b short"></span><span>ByLayer</span><i class="chev"></i></div>
    <div class="combo c-plot"><span>ByColor</span><i class="chev"></i></div>
    <span class="grip g-dark"></span>
    <span class="tb-a">A<svg class="tb-brush"><use href="#brush"/></svg></span>
    <div class="combo c-hz"><span>HZ</span><i class="chev"></i></div>
</div>

<main class="workspace">
    <aside class="left-dock">
        <span class="grip-h"></span>
        <svg class="dk"><use href="#mark-t"/></svg><svg class="dk"><use href="#mark-v"/></svg><svg class="dk"><use href="#mark-t"/></svg><svg class="dk"><use href="#mark-d"/></svg>
        <hr>
        <svg class="dk"><use href="#mark-d"/></svg><svg class="dk"><use href="#mark-d"/></svg><svg class="dk"><use href="#mark-c"/></svg><svg class="dk"><use href="#mark-v"/></svg>
        <hr>
        <svg class="dk"><use href="#mark-o"/></svg><svg class="dk"><use href="#mark-t"/></svg><svg class="dk"><use href="#mark-t"/></svg><svg class="dk"><use href="#mark-o"/></svg><svg class="dk"><use href="#mark-t"/></svg>
        <hr>
        <svg class="dk"><use href="#mark-o"/></svg><svg class="dk"><use href="#mark-c"/></svg><svg class="dk"><use href="#mark-o"/></svg><svg class="dk"><use href="#mark-v"/></svg>
        <hr>
        <svg class="dk"><use href="#mark-t"/></svg><svg class="dk"><use href="#mark-t"/></svg><svg class="dk"><use href="#mark-o"/></svg>
        <hr>
        <svg class="dk"><use href="#mark-t"/></svg>
    </aside>

    <div class="canvas">
        <div class="view-label">[-][俯视][二维线框]</div>

        <div class="cad-text t1"><span class="t1-latin">dmx</span><span class="t1-cjk">命令</span></div>
        <div class="cad-rule r1"></div>
        <div class="cad-text t2">画折断线，或点选线则在拾取之处画出折断符号。</div>
        <div class="cad-rule r2"></div>
        <div class="cad-text t3">如果生成折断线后选择拷贝则生成双折断线，并自动修剪删除两折断线之间的实体。</div>
        <div class="cad-rule r3"></div>

        <svg class="polyline" viewBox="0 0 2380 1231">
            <polyline points="527,681 762,599 1002,599 1155,737 1746,737 1850,616 2007,616 2099,737"/>
        </svg>

        <div class="cmdline">
            <div class="cmd-left">
                <span class="cmd-grip"></span><span class="cmd-x">×</span><svg class="ic-w"><use href="#wrench"/></svg>
            </div>
            <div class="cmd-input">
                <svg class="ic-c"><use href="#cmd"/></svg><i class="caret sm dark"></i>
                <span class="placeholder">键入命令</span>
                <i class="caret-up"></i>
            </div>
        </div>
    </div>
</main>

<footer class="bottom">
    <div class="layout-tabs">
        <div class="ltab active">模型</div>
        <div class="ltab">Layout1</div>
        <div class="ltab-plus">+</div>
    </div>
    <div class="status">
        <div class="st-cell s-model"><b>模型</b></div>
        <div class="st-cell s-snap">
            <span class="st-grid"></span><span class="st-dots"></span><i class="caret"></i>
        </div>
        <div class="st-cell s-ortho"><svg class="st"><use href="#ortho"/></svg></div>
        <div class="st-cell s-draft">
            <span class="st-on"><svg class="st"><use href="#lshape"/></svg></span>
            <svg class="st"><use href="#polar"/></svg><i class="caret"></i>
            <svg class="st"><use href="#osnap"/></svg><i class="caret"></i>
        </div>
        <div class="st-cell s-angle">
            <span class="st-on"><svg class="st"><use href="#angle"/></svg></span>
            <svg class="st"><use href="#iso"/></svg><i class="caret"></i>
        </div>
        <div class="st-cell s-bars"><svg class="st"><use href="#bars"/></svg></div>
        <div class="st-cell s-annot">
            <svg class="st"><use href="#annot"/></svg><svg class="st"><use href="#annot"/></svg><svg class="st"><use href="#annot"/></svg>
            <span class="st-scale">1:1 / 100%</span><i class="caret"></i>
        </div>
        <div class="st-cell s-units">
            <svg class="st-r"><use href="#ruler"/></svg><span class="st-unit">小数</span><i class="caret"></i>
        </div>
        <div class="st-cell s-list"><svg class="st"><use href="#listbox"/></svg></div>
        <div class="st-cell s-iso"><svg class="st-l"><use href="#iso-obj"/></svg><svg class="st-l"><use href="#cone"/></svg></div>
        <div class="st-cell s-full"><svg class="st"><use href="#fullscr"/></svg><span class="st-menu"></span></div>
    </div>
</footer>

<aside class="palette">
    <div class="palette-inner">
        <div class="pal-top">
            <div class="pal-select"><span>无选择</span><i class="pal-drop"><i class="caret"></i></i></div>
            <svg class="ic-p"><use href="#pal-add"/></svg><svg class="ic-p"><use href="#pal-pick"/></svg><svg class="ic-p"><use href="#pal-quick"/></svg>
        </div>

        <section class="sec">
            <h3>常规<span class="collapse"></span></h3>
            <div class="row"><label>颜色</label><span><i class="swatch-p"></i>ByLayer</span></div>
            <div class="row"><label>图层</label><span>2-粗实线层</span></div>
            <div class="row"><label>线型</label><span class="v-line"><i class="thin"></i>ByLa...</span></div>
            <div class="row"><label>线型比例</label><span>40.0000</span></div>
            <div class="row"><label>线宽</label><span class="v-line"><i class="thick"></i>ByLa...</span></div>
            <div class="row"><label>透明度</label><span>ByLayer</span></div>
            <div class="row"><label>厚度</label><span>0.0000</span></div>
        </section>
        <section class="sec">
            <h3>三维效果<span class="collapse"></span></h3>
            <div class="row"><label>材质</label><span>ByLayer</span></div>
        </section>
        <section class="sec">
            <h3>打印样式<span class="collapse"></span></h3>
            <div class="row"><label>打印样式</label><span class="off">ByColor</span></div>
            <div class="row"><label>打印样...</label><span>无</span></div>
            <div class="row"><label>打印表...</label><span class="off">模型</span></div>
            <div class="row"><label>打印表...</label><span class="off">不可用</span></div>
        </section>
        <section class="sec">
            <h3>视图<span class="collapse"></span></h3>
            <div class="row"><label>圆心 X...</label><span class="off">13919771.4...</span></div>
            <div class="row"><label>圆心 Y...</label><span class="off">8972857.17...</span></div>
            <div class="row"><label>圆心 Z...</label><span class="off">0.0000</span></div>
            <div class="row"><label>高度</label><span class="off">14643.7075</span></div>
            <div class="row"><label>宽度</label><span class="off">33076.4297</span></div>
        </section>
        <section class="sec">
            <h3>其他<span class="collapse"></span></h3>
            <div class="row"><label>注释比例</label><span>1:1</span></div>
            <div class="row"><label>打开 U...</label><span>否</span></div>
            <div class="row"><label>在原点...</label><span>否</span></div>
            <div class="row"><label>每个视...</label><span>是</span></div>
            <div class="row"><label>UCS 名称</label><span></span></div>
            <div class="row"><label>视觉样式</label><span>二维线框</span></div>
        </section>
    </div>
</aside>
</body>
</html>
```

FILE: styles.css
```css
* {
    box-sizing: border-box;
}
html, body {
    margin: 0;
    padding: 0;
}
body {
    position: relative;
    width: 2830px;
    height: 1676px;
    overflow: hidden;
    display: flex;
    flex-direction: column;
    background: #575757;
    color: #e6e6e6;
    font-family: "Noto Sans CJK SC", "Noto Sans", sans-serif;
    font-size: 24px;
    line-height: 30px;
}
svg {
    display: block;
    flex: none;
    overflow: visible;
}
.sprite {
    position: absolute;
    width: 0;
    height: 0;
}

/* icon paint */
.fg { fill: #c8c8c8; }
.fg2 { fill: #6d6d6d; }
.fb { fill: #6cb8f0; }
.fo { fill: #f4c27a; }
.fw { fill: #e2e2e2; }
.fd { fill: #555; }
.sg, .sg3, .sg5, .sb, .so, .sw, .sd, .swb, .dash { fill: none; stroke-width: 2; }
.sg { stroke: #bdbdbd; }
.sg3 { stroke: #bdbdbd; stroke-width: 4; }
.sg5 { stroke: #bdbdbd; stroke-width: 5; }
.sb { stroke: #6cb8f0; }
.so { stroke: #f4c27a; }
.sw { stroke: #dcdcdc; }
.sd { stroke: #555; }
.swb { stroke: #f2f2f2; stroke-width: 3; }
.dash { stroke: #c8c8c8; stroke-width: 3; stroke-dasharray: 6 2; }

/* menu */
.menubar {
    height: 41px;
    flex: none;
    display: flex;
    align-items: flex-start;
    background: linear-gradient(#8f8f8f 0, #7a7a7a 12px, #6a6a6a 32px, #5f5f5f 38px);
    border-bottom: 2px solid #3c3c3c;
    padding-top: 3px;
    position: relative;
}
.app-btn {
    width: 54px;
    height: 30px;
    margin-top: -3px;
    background: #737373;
    border-right: 2px solid #222;
    border-bottom: 2px solid #222;
    position: relative;
}
.app-dot {
    position: absolute;
    left: 17px;
    top: 0;
    width: 10px;
    height: 5px;
    background: #c23a3a;
    border-radius: 0 0 5px 5px;
}
.menu-main, .menu-extra {
    display: flex;
    white-space: nowrap;
}
.menu-main {
    margin-left: 20px;
    gap: 35.7px;
}
.menu-extra {
    margin-left: 27px;
    gap: 14.6px;
}
.win-btns {
    margin-left: auto;
    margin-right: 8px;
    display: flex;
    align-items: center;
    gap: 14px;
    height: 30px;
    margin-top: 3px;
}
.win-min {
    width: 20px;
    height: 4px;
    background: #333;
    margin-top: 12px;
}
.win-restore {
    width: 24px;
    height: 28px;
    border: 3px solid #3a3a3a;
    border-radius: 2px;
}

/* ribbon tabs */
.ribbon-tabs {
    height: 40px;
    flex: none;
    display: flex;
    gap: 40px;
    padding: 4px 0 0 0;
    background: #575757;
    border-bottom: 2px solid #3a3a3a;
    color: #c8c8c8;
    white-space: nowrap;
}
.rtab {
    line-height: 32px;
}
.rtab.active {
    color: #f2f2f2;
    background: #666;
    margin-top: 2px;
    margin-right: -17px;
    width: 64px;
    text-indent: -1px;
    border-top: 2px solid #333;
    border-right: 2px solid #333;
}
.rtab-more {
    display: flex;
    align-items: center;
    margin-left: -14px;
    height: 32px;
    gap: 3px;
}
.tri-r {
    width: 0;
    height: 0;
    border-left: 8px solid #eee;
    border-top: 9px solid transparent;
    border-bottom: 9px solid transparent;
}
.cam {
    width: 28px;
    height: 18px;
    margin: 0 6px 0 14px;
    border-radius: 5px;
    background: #ddd;
    border: 3px solid #444;
}

/* ribbon */
.ribbon {
    height: 197px;
    flex: none;
    display: flex;
    background: #575757;
    border-bottom: 4px solid #6e6e6e;
}
.panel {
    flex: none;
    display: flex;
    flex-direction: column;
    border-right: 2px solid #3f3f3f;
    margin-right: 2px;
}
.p-draw { width: 394px; }
.p-modify { width: 452px; }
.p-note { width: 311px; }
.p-layer { width: 503px; }
.p-block { width: 194px; }
.p-prop { width: 400px; }
.p-group { width: 134px; }
.p-measure { width: 151px; }
.p-paste { width: 150px; }
.p-base { width: 125px; border-right: none; }
.panel-body {
    height: 171px;
    flex: none;
    padding-top: 8px;
    display: flex;
}
.panel-title {
    position: relative;
    height: 21px;
    margin: 0 2px;
    padding-bottom: 9px;
    line-height: 21px;
    background: #4e4e4e;
    color: #eee;
    display: flex;
    justify-content: center;
    align-items: center;
    gap: 10px;
    font-size: 24px;
}
.p-draw .panel-title { padding-right: 20px; }
.p-prop .panel-title { padding-right: 28px; }
.panel-title .caret { margin-top: 2px; }
.launcher {
    position: absolute;
    right: 4px;
    font-size: 20px;
}
.big {
    flex: none;
    height: 162px;
    display: flex;
    flex-direction: column;
    align-items: center;
}
.big .lbl {
    white-space: nowrap;
}
.big .caret {
    margin-top: 4px;
}
.w45 { width: 45px; }
.w50 { width: 50px; }
.w72 { width: 72px; margin-left: 6px; }
.w74 { width: 74px; margin-left: 4px; }
.w76 { width: 76px; }
.w80 { width: 80px; margin-left: 1px; }
.w82 { width: 82px; }
.w104 { width: 104px; margin-left: -3px; }
.w110 { width: 110px; }
.w118 { width: 118px; }
.w120 { width: 120px; }
.clip-l { margin-left: -5px; }
.i-line { width: 48px; height: 77px; padding-top: 6px; margin-left: -3px; }
.i-pline { width: 56px; height: 77px; padding-top: 21px; }
.i-big { width: 64px; height: 77px; }
.i-a { width: 36px; height: 77px; padding-top: 10px; }
.i-dim { width: 50px; height: 77px; padding-top: 6px; }
.i-ruler { width: 60px; height: 77px; padding-top: 20px; }
.i-base { width: 64px; height: 77px; padding-top: 14px; }
.big-circle {
    display: block;
    width: 50px;
    height: 77px;
    position: relative;
}
.big-circle::before {
    content: "";
    position: absolute;
    left: 0;
    top: 7px;
    width: 50px;
    height: 62px;
    border: 2px solid #bdbdbd;
    border-radius: 50%;
}
.arc-peek {
    display: block;
    position: relative;
    width: 100%;
    height: 77px;
}
.arc-peek::before {
    content: "";
    position: absolute;
    left: 29px;
    top: 61px;
    width: 5px;
    height: 8px;
    background: #6cb8f0;
}
.arc-peek::after {
    content: "";
    position: absolute;
    left: 76px;
    top: 7px;
    width: 10px;
    height: 6px;
    background: #6cb8f0;
}

.small-col {
    display: grid;
    grid-auto-rows: 47px;
}
.tool {
    display: flex;
    align-items: center;
    gap: 10px;
    white-space: nowrap;
}
.ic { width: 32px; height: 32px; }
.ic-s { width: 34px; height: 34px; }
.col-draw { margin-left: -4px; }
.col-draw .tool { gap: 14px; }
.note-text { margin-left: 11px; }
.note-dim { margin-left: 9px; }
.col-note { margin-left: 11px; }
.col-note .lbl-far { margin-left: 37px; }
.mod-grid {
    display: grid;
    grid-template-columns: 120px 117px 150px 40px;
    grid-auto-rows: 47px;
    padding-left: 13px;
}
.mod-grid .caret { margin-left: 8px; }
.caret {
    display: inline-block;
    width: 0;
    height: 0;
    border-left: 7px solid transparent;
    border-right: 7px solid transparent;
    border-top: 10px solid #eee;
    flex: none;
}
.caret.sm {
    border-left-width: 5px;
    border-right-width: 5px;
    border-top-width: 8px;
}
.caret.dark {
    border-top-color: #666;
}

.layer-side {
    margin-left: 3px;
    display: flex;
    flex-direction: column;
}
.rib-combo {
    height: 43px;
    display: flex;
    align-items: center;
    border: 2px solid #2f2f2f;
    background: linear-gradient(#6f6f6f 0, #6a6a6a 55%, #555 56%, #555 100%);
    white-space: nowrap;
    padding-right: 4px;
}
.layer-combo {
    width: 416px;
    margin-top: 3px;
    padding-left: 6px;
    gap: 2px;
}
.combo-text { margin-left: 6px; }
.swatch {
    width: 28px;
    height: 28px;
    margin-left: 7px;
    background: #ff0;
    border: 2px solid #000;
}
.layer-combo .combo-text { margin-left: 9px; }
.caret.end {
    margin-left: auto;
    margin-right: 3px;
}
.layer-row {
    display: flex;
    align-items: center;
    height: 47px;
    gap: 16px;
    padding-left: 9px;
    margin-top: 1px;
    white-space: nowrap;
}
.layer-row span { margin-left: -7px; }
.p-block .small-col .tool { gap: 8px; }
.p-block .small-col { margin-left: 7px; }
.prop-icons {
    display: flex;
    flex-direction: column;
    gap: 15px;
    padding-top: 6px;
    margin-left: 5px;
}
.prop-combos {
    margin-left: 5px;
    width: 273px;
    display: flex;
    flex-direction: column;
    gap: 3px;
    padding-top: 3px;
}
.swatch-lg {
    width: 30px;
    height: 32px;
    margin-left: 24px;
    background: #ff0;
    border: 2px solid #999;
}
.t-bylayer { margin-left: 20px; }
.rule-thick {
    width: 128px;
    height: 8px;
    margin-left: 6px;
    background: #eee;
}
.rule-thin {
    width: 128px;
    height: 2px;
    margin-left: 6px;
    background: #eee;
}
.rule-thick + .combo-text, .rule-thin + .combo-text { margin-left: 3px; }
.tool-on {
    width: 47px;
    height: 44px;
    margin-left: -5px;
    padding-left: 7px;
    background: linear-gradient(#5b7ba6, #4a6a96);
    border: 2px solid #2b3a50;
}

/* floating draw toolbar */
.float-bar {
    position: absolute;
    left: 127px;
    top: 102px;
    width: 950px;
    height: 45px;
    display: flex;
    align-items: center;
    gap: 13.7px;
    padding-left: 4px;
    background: #555;
    border: 2px solid #333;
}
.grip {
    width: 6px;
    height: 30px;
    flex: none;
    background: repeating-linear-gradient(#111 0, #111 2px, #777 2px, #777 4px);
}
.fl { width: 32px; height: 32px; }
.fl-a {
    font: bold 36px "Liberation Sans", sans-serif;
    color: #c8c8c8;
    width: 33px;
    text-align: center;
}
.fl-x {
    position: absolute;
    right: 4px;
    color: #aaa;
    font-size: 18px;
}

/* document tabs */
.doc-tabs {
    height: 53px;
    flex: none;
    display: flex;
    align-items: flex-end;
    background: #333;
    border-bottom: 3px solid #555;
    padding-left: 5px;
    box-shadow: inset 0 -2px 0 #1c1c1c;
}
.dtab {
    width: 258px;
    height: 44px;
    margin-bottom: 5px;
    padding-left: 32px;
    color: #9d9d9d;
    background: #5a5a5a;
    border-top: 14px solid #666;
    border-radius: 24px 24px 0 0;
    line-height: 30px;
}
.dtab.active {
    width: 265px;
    margin-left: -8px;
    padding-left: 30px;
    color: #e4e4e4;
    background: #6a6a6a;
    border-top-color: #7b7b7b;
    position: relative;
}
.dtab-x {
    position: absolute;
    left: 218px;
    top: 0;
    color: #4a4a4a;
    font-size: 26px;
}
.dtab-plus {
    width: 44px;
    height: 30px;
    margin: 0 0 6px 4px;
    background: #5a5a5a;
    border-radius: 12px 16px 0 0;
    color: #ccc;
    text-align: center;
    font-weight: bold;
    line-height: 28px;
}

/* classic toolbar */
.toolbar {
    height: 57px;
    flex: none;
    display: flex;
    align-items: center;
    background: #565656;
    padding-left: 4px;
    border-bottom: 5px solid #4a4a4a;
    color: #111;
    white-space: nowrap;
}
.tb-first { width: 32px; margin-right: 7px; }
.combo {
    height: 38px;
    display: flex;
    align-items: center;
    background: #eee;
    border-bottom: 2px solid #aaa;
    padding-left: 6px;
    position: relative;
}
.chev {
    position: absolute;
    right: 10px;
    top: 10px;
    width: 10px;
    height: 10px;
    border-right: 2px solid #333;
    border-bottom: 2px solid #333;
    transform: scaleX(.9) rotate(45deg);
}
.c-layer { width: 600px; gap: 3px; padding-left: 7px; }
.ic-t { width: 30px; height: 32px; }
.dimmed { opacity: .45; }
.swatch-t {
    width: 20px;
    height: 20px;
    margin-right: 8px;
    margin-left: 6px;
    background: #ff0;
    border: 2px solid #000;
}
.tb-icons {
    display: flex;
    gap: 11px;
    margin-left: 8px;
}
.tb-sep {
    width: 2px;
    height: 46px;
    background: #333;
    margin: 0 7px;
}
.g-dark {
    margin-right: 5px;
    width: 5px;
}
.tb-icons.g2 { margin-left: 11px; gap: 15px; }
.c-color { width: 300px; margin-left: 0; }
.c-ltype { width: 320px; margin-left: 6px; padding-left: 10px; }
.c-lweight { width: 250px; margin-left: 6px; padding-left: 10px; }
.c-plot { width: 237px; margin-left: 6px; background: #ccc; color: #777; padding-left: 20px; margin-right: 10px; }
.c-plot .chev { border-color: #999; }
.rule-b {
    width: 120px;
    height: 2px;
    background: #111;
    margin-right: 10px;
}
.rule-b.short { width: 70px; }
.tb-a {
    width: 42px;
    display: flex;
    justify-content: center;
    align-items: center;
    font: bold 32px "Liberation Sans", sans-serif;
    color: #bbb;
}
.tb-brush {
    width: 12px;
    height: 24px;
    margin: 8px 0 0 -6px;
}
.c-hz { width: 240px; padding-left: 39px; }

/* workspace */
.workspace {
    flex: 1;
    display: flex;
    min-height: 0;
    background: #1f2a31;
}
.left-dock {
    width: 27px;
    flex: none;
    overflow: hidden;
    padding: 7px 4px 0 0;
    background: #585858;
    border-right: 5px solid #4b4b4b;
    height: 100%;
    display: flex;
    flex-direction: column;
    gap: 17px;
}
.left-dock hr {
    margin: -6px 0 -6px 0;
    width: 20px;
    border: none;
    border-top: 2px solid #ddd;
    flex: none;
}
.grip-h {
    height: 6px;
    width: 10px;
    flex: none;
    margin-left: 2px;
    background: repeating-linear-gradient(90deg, #222 0, #222 2px, #777 2px, #777 4px);
}
.dk { width: 18px; height: 26px; }
.canvas {
    flex: 1;
    position: relative;
    overflow: hidden;
}
.view-label {
    position: absolute;
    left: 4px;
    top: 9px;
    font-size: 25px;
    color: #0b0b0b;
    white-space: nowrap;
}
.cad-text {
    position: absolute;
    white-space: nowrap;
    color: #00d000;
    font-size: 40px;
    line-height: 50px;
    -webkit-text-stroke: 1.3px #1f2a31;
    transform: scaleY(1.3);
    transform-origin: 0 50%;
}
.t1 { left: 1130px; top: 119px; display: flex; align-items: baseline; }
.t1-latin {
    font-family: "Liberation Sans", sans-serif;
    font-size: 50px;
    letter-spacing: 10px;
    -webkit-text-stroke: 1.5px #1f2a31;
}
.t1-cjk {
    margin-left: 39px;
    font-size: 41px;
}
.t2 { left: 827px; top: 243px; font-size: 39.2px; }
.t3 { left: 533px; top: 367px; font-size: 39.7px; }
.cad-rule {
    position: absolute;
    height: 9px;
    border-top: 5px solid #d6d6d6;
    border-bottom: 2px solid #8a8a8a;
}
.r1 { left: 1114px; top: 183px; width: 271px; }
.r2 { left: 814px; top: 306px; width: 886px; }
.r3 { left: 519px; top: 429px; width: 1490px; }
.polyline {
    position: absolute;
    left: 0;
    top: 0;
    width: 2380px;
    height: 1231px;
}
.polyline polyline {
    fill: none;
    stroke: #c8c800;
    stroke-width: 1.6;
}
.cmdline {
    position: absolute;
    left: 523px;
    top: 1087px;
    width: 1525px;
    height: 54px;
    display: flex;
    border: 2px solid #6a6a6a;
    border-radius: 4px;
    overflow: hidden;
}
.cmd-left {
    width: 105px;
    flex: none;
    display: flex;
    align-items: center;
    padding-left: 6px;
    gap: 9px;
    background: linear-gradient(#666 0, #4a4a4a 45%, #3c3c3c 100%);
}
.cmd-grip {
    width: 8px;
    height: 36px;
    background: repeating-linear-gradient(#aaa 0, #aaa 3px, #4a4a4a 3px, #4a4a4a 7px);
}
.cmd-x {
    color: #ddd;
    font-size: 32px;
    line-height: 32px;
}
.ic-w { width: 26px; height: 30px; margin-left: 4px; }
.ic-c { width: 30px; height: 30px; }
.cmd-input {
    flex: 1;
    display: flex;
    align-items: center;
    gap: 8px;
    padding-left: 10px;
    background: #b4b7ba;
}
.placeholder {
    margin-left: 8px;
    font-size: 26px;
    color: #7c7c7c;
    font-style: italic;
}
.caret-up {
    margin-left: auto;
    margin-right: 10px;
    width: 0;
    height: 0;
    border-left: 7px solid transparent;
    border-right: 7px solid transparent;
    border-bottom: 9px solid #333;
}

/* bottom strip */
.bottom {
    height: 57px;
    flex: none;
    display: flex;
    justify-content: space-between;
    background: #333;
    border-top: 2px solid #555;
    border-bottom: 3px solid #7a96b8;
}
.layout-tabs {
    display: flex;
    align-items: flex-start;
    padding-top: 1px;
}
.ltab {
    height: 33px;
    padding: 0 18px 0 15px;
    line-height: 30px;
    color: #a9a9a9;
    background: #636363;
    border-radius: 0 0 12px 12px;
    margin-right: 8px;
}
.ltab.active {
    width: 90px;
    padding: 0 20px;
    color: #fff;
    font-weight: bold;
    background: #7c7c7c;
}
.ltab-plus {
    width: 44px;
    height: 32px;
    margin-left: 6px;
    text-align: center;
    color: #ccc;
    font-weight: bold;
    background: #5a5a5a;
    border-radius: 0 12px 0 12px;
}
.status {
    width: 1372px;
    display: flex;
    align-items: center;
    background: #5c5c5c;
    color: #eee;
    white-space: nowrap;
}
.st-cell {
    height: 100%;
    display: flex;
    align-items: center;
    border-left: 2px solid #494949;
    padding: 0 6px;
    gap: 12px;
}
.st { width: 30px; height: 40px; }
.st-r { width: 20px; height: 44px; }
.st-l { width: 36px; height: 50px; }
.s-model { width: 66px; border-left: none; padding-left: 13px; }
.s-model b { font-size: 24px; }
.s-snap { width: 132px; gap: 17px; padding-left: 10px; }
.s-snap .caret { margin-left: 3px; }
.s-ortho { width: 52px; }
.s-draft { width: 206px; padding-left: 1px; gap: 9px; }
.s-draft .st-on + .st { margin-left: 2px; }
.s-draft .caret + .st { margin-left: 6px; }
.s-draft .st + .caret { margin-left: 3px; }
.s-angle { width: 127px; padding-left: 1px; gap: 9px; }
.s-angle .st + .caret { margin-left: 5px; }
.s-bars { width: 52px; padding-left: 10px; }
.s-annot { width: 296px; gap: 18px; padding-left: 12px; }
.s-units { width: 196px; padding-left: 19px; gap: 11px; }
.s-list { width: 54px; padding-left: 12px; }
.s-iso { width: 125px; gap: 22px; padding-left: 12px; }
.s-full { flex: 1; gap: 14px; padding-left: 8px; }
.st-on {
    width: 46px;
    height: 44px;
    display: flex;
    align-items: center;
    justify-content: center;
    background: #6690bd;
}
.st-grid {
    width: 30px;
    height: 36px;
    background:
        linear-gradient(#ddd, #ddd) 0 5px / 100% 2px no-repeat,
        linear-gradient(#ddd, #ddd) 0 17px / 100% 2px no-repeat,
        linear-gradient(#ddd, #ddd) 0 29px / 100% 2px no-repeat,
        linear-gradient(#ddd, #ddd) 5px 0 / 2px 100% no-repeat,
        linear-gradient(#ddd, #ddd) 14px 0 / 2px 100% no-repeat,
        linear-gradient(#ddd, #ddd) 23px 0 / 2px 100% no-repeat;
}
.st-dots {
    width: 28px;
    height: 34px;
    background-image: radial-gradient(#ddd 0 2px, transparent 3px);
    background-size: 10px 12px;
}
.st-scale {
    font-size: 24px;
    letter-spacing: -0.6px;
}
.st-unit { margin-left: 14px; margin-right: 47px; }
.st-menu {
    width: 14px;
    height: 30px;
    background: repeating-linear-gradient(#ddd 0, #ddd 5px, transparent 5px, transparent 12px);
}

/* properties palette */
.palette {
    position: absolute;
    left: 2407px;
    top: 243px;
    width: 408px;
    height: 1382px;
    background: #5a5a5a;
    border: 2px solid #3a3a3a;
    border-radius: 12px 0 10px 10px;
    padding: 4px;
    color: #ececec;
}
.palette-inner {
    height: 100%;
    border: 2px solid #444;
    border-radius: 10px;
    padding: 20px 0 0 13px;
}
.pal-top {
    display: flex;
    align-items: center;
    height: 43px;
    gap: 15px;
}
.pal-select {
    width: 230px;
    height: 43px;
    margin-right: -2px;
    display: flex;
    border: 2px solid #474747;
    background: linear-gradient(#6e6e6e 0, #6a6a6a 85%, #5c5c5c 86%);
    padding-left: 6px;
    line-height: 38px;
    position: relative;
}
.pal-drop {
    position: absolute;
    right: 0;
    top: 0;
    bottom: 0;
    width: 30px;
    background: #5a5a5a;
    border-left: 2px solid #474747;
    display: flex;
    align-items: center;
    justify-content: center;
}
.ic-p { width: 28px; height: 30px; }
.sec {
    width: 332px;
    margin: 0 0 7.3px 10px;
}
.pal-top + .sec { margin-top: 13px; }
.sec h3 {
    margin: 0;
    height: 40px;
    padding-left: 11px;
    display: flex;
    align-items: center;
    justify-content: space-between;
    background: #454545;
    border: 2px solid #353535;
    font-size: 24px;
    font-weight: bold;
    color: #f2f2f2;
}
.collapse {
    width: 12px;
    height: 3px;
    background: #eee;
    margin-right: 14px;
}
.row {
    height: 39px;
    margin-bottom: -0.1px;
    display: flex;
    align-items: center;
    white-space: nowrap;
}
.row label {
    width: 121px;
    margin-left: 48px;
    flex: none;
}
.row .off {
    color: #a2a2a2;
}
.swatch-p {
    display: inline-block;
    width: 20px;
    height: 20px;
    margin: 0 13px 0 2px;
    vertical-align: -3px;
    background: #ff0;
    border: 1px solid #000;
}
.v-line {
    display: flex;
    align-items: center;
}
.v-line i {
    display: block;
    width: 66px;
    margin-right: 10px;
}
.v-line .thin { height: 2px; background: #eee; margin-left: 7px; }
.v-line .thick { width: 73px; height: 6px; background: #eee; margin-right: 8px; }
```
